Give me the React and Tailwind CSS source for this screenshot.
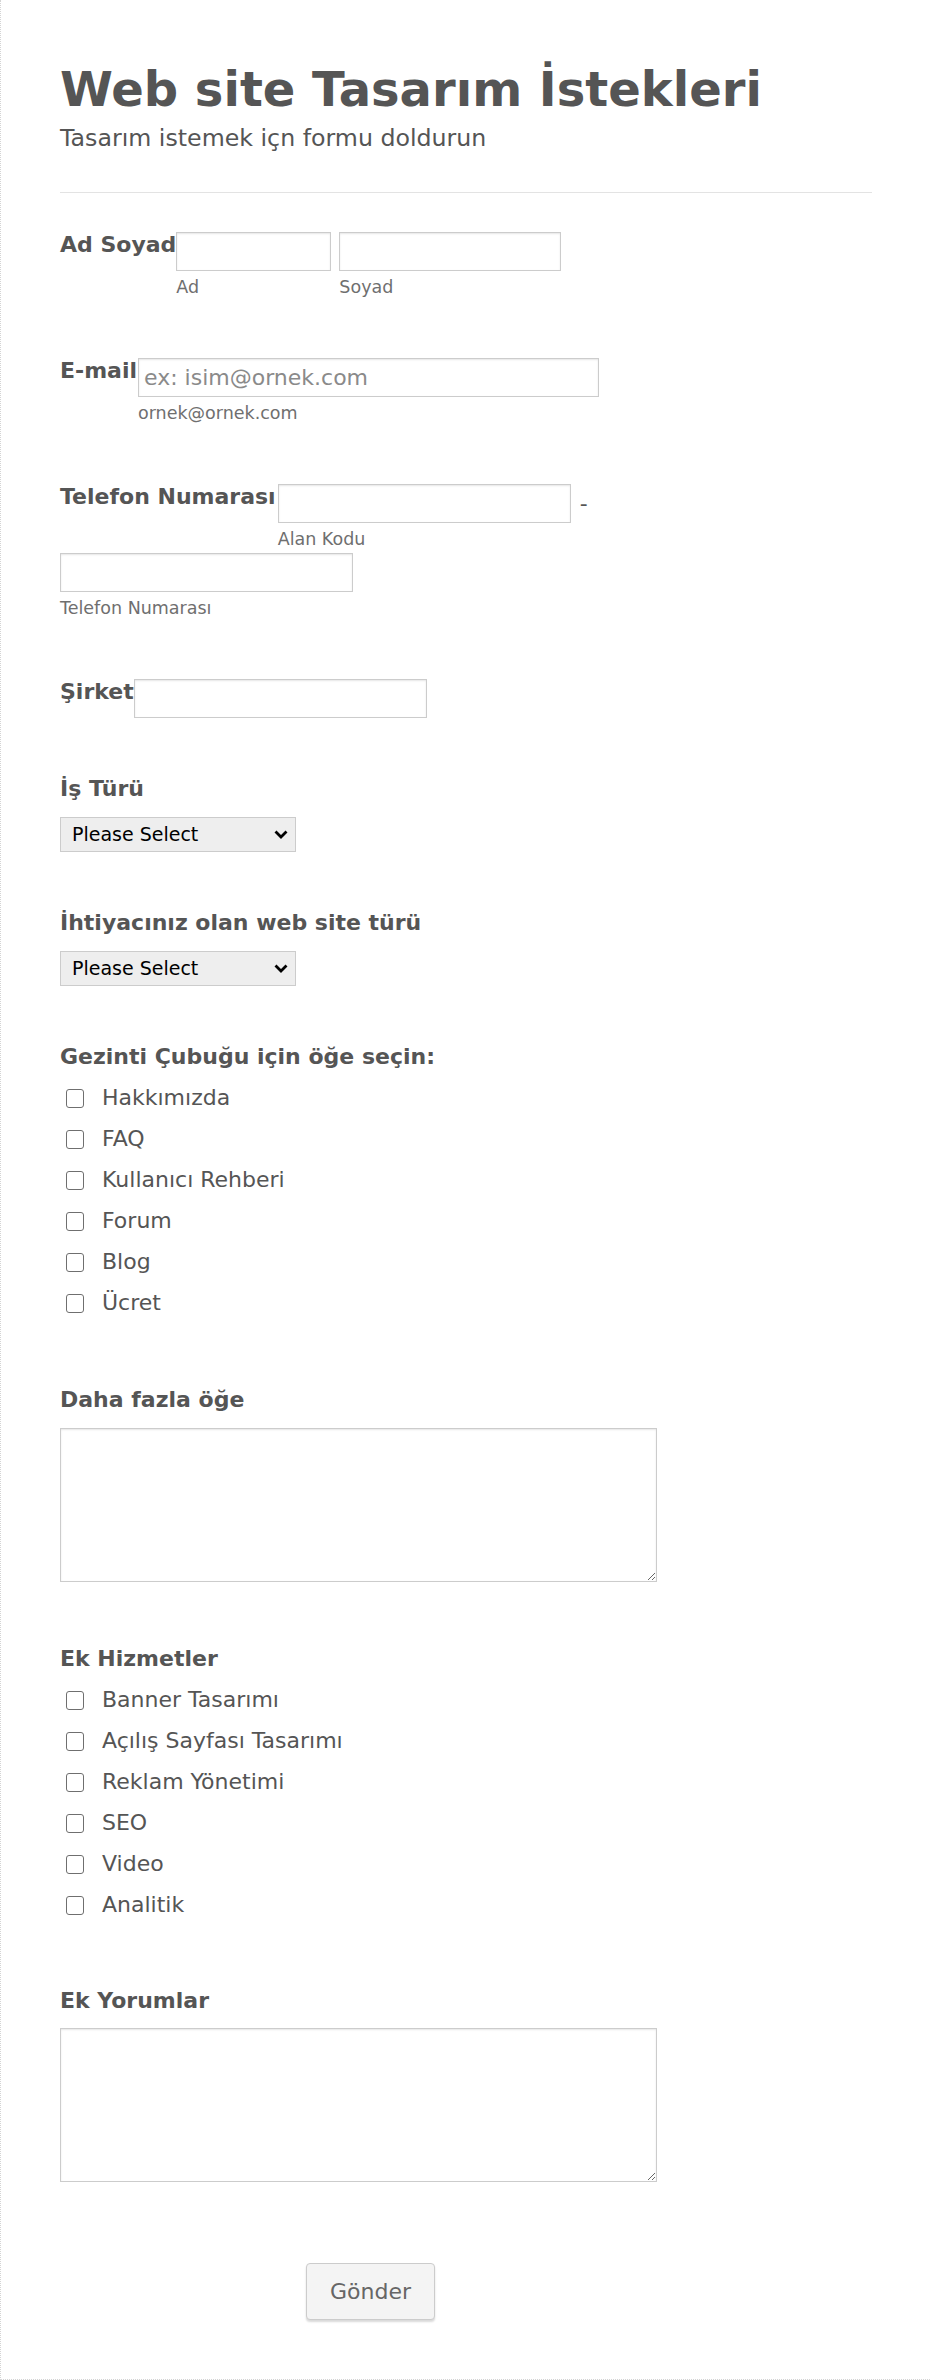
import React from 'react';

const inputCls =
  'block h-[39px] border border-[#cccccc] bg-white shadow-[inset_0_1px_2px_rgba(0,0,0,0.1)] px-[5px] text-[22px] text-[#555] placeholder:text-[#8a8a8a] outline-none';
const labelCls = 'text-[22px] leading-[26px] font-bold text-[#555] whitespace-nowrap';
const subCls = 'mt-[5px] text-[17.5px] leading-[22px] text-[#6f6f6f]';

function Field({ width, sub, placeholder }) {
  return (
    <div className="flex flex-col">
      <input type="text" placeholder={placeholder} className={`${inputCls} ${width}`} />
      {sub && <span className={subCls}>{sub}</span>}
    </div>
  );
}

function Select() {
  return (
    <div className="relative mt-[15px] w-[236px]">
      <select className="block w-[236px] h-[35px] appearance-none border border-[#cccccc] bg-[#eeeeee] pl-[11px] text-[19px] text-black outline-none">
        <option>Please Select</option>
      </select>
      {/* chevron */}
      <svg className="absolute right-[8px] top-[13px] pointer-events-none" width="14" height="9" viewBox="0 0 14 9">
        <polyline points="1.5,1.5 7,7 12.5,1.5" fill="none" stroke="#000" strokeWidth="2.8" />
      </svg>
    </div>
  );
}

function Checks({ items }) {
  return (
    <div className="mt-[15px] flex flex-col gap-[15px]">
      {items.map((item) => (
        <label key={item} className="flex items-center h-[26px]">
          <span className="ml-[6px] w-[18px] h-[19px] rounded-[3px] border-[1.5px] border-[#6f6f6f] bg-white" />
          <span className="ml-[18px] text-[22px] leading-[26px] text-[#555]">{item}</span>
        </label>
      ))}
    </div>
  );
}

function Area() {
  return (
    <textarea className="block mt-[15px] w-[597px] h-[154px] border border-[#cccccc] bg-white shadow-[inset_0_1px_2px_rgba(0,0,0,0.1)] outline-none" />
  );
}

export default function App() {
  return (
    <div className="h-[2380px] bg-white border-l border-b border-dotted border-[#d4d4d4] pl-[59px] pt-[61px] font-['DejaVu_Sans',sans-serif]">
      {/* Header */}
      <h1 className="text-[48px] leading-[56px] font-bold text-[#555]">Web site Tasarım İstekleri</h1>
      <p className="mt-[7px] text-[23.7px] leading-[28px] text-[#555]">Tasarım istemek içn formu doldurun</p>
      <div className="mt-[40px] w-[812px] border-t border-[#e3e3e3]" />

      {/* Ad Soyad */}
      <div className="mt-[39px] flex items-start">
        <span className={labelCls}>Ad Soyad</span>
        <div className="flex gap-[8px]">
          <Field width="w-[155px]" sub="Ad" />
          <Field width="w-[222px]" sub="Soyad" />
        </div>
      </div>

      {/* E-mail */}
      <div className="mt-[60px] flex items-start">
        <span className={`${labelCls} mr-[1px]`}>E-mail</span>
        <Field width="w-[461px]" sub="ornek@ornek.com" placeholder="ex: isim@ornek.com" />
      </div>

      {/* Telefon */}
      <div className="mt-[60px] flex items-start">
        <span className={`${labelCls} mr-[2px]`}>Telefon Numarası</span>
        <Field width="w-[293px]" sub="Alan Kodu" />
        <span className="ml-[9px] mt-[7px] text-[22px] leading-[26px] text-[#555]">-</span>
      </div>
      <div className="mt-[3px]">
        <Field width="w-[293px]" sub="Telefon Numarası" />
      </div>

      {/* Şirket */}
      <div className="mt-[60px] flex items-start">
        <span className={labelCls}>Şirket</span>
        <Field width="w-[293px]" />
      </div>

      {/* İş Türü */}
      <div className="mt-[58px]">
        <div className={labelCls}>İş Türü</div>
        <Select />
      </div>

      <div className="mt-[58px]">
        <div className={labelCls}>İhtiyacınız olan web site türü</div>
        <Select />
      </div>

      <div className="mt-[58px]">
        <div className={labelCls}>Gezinti Çubuğu için öğe seçin:</div>
        <Checks items={['Hakkımızda', 'FAQ', 'Kullanıcı Rehberi', 'Forum', 'Blog', 'Ücret']} />
      </div>

      <div className="mt-[71px]">
        <div className={labelCls}>Daha fazla öğe</div>
        <Area />
      </div>

      <div className="mt-[64px]">
        <div className={labelCls}>Ek Hizmetler</div>
        <Checks
          items={['Banner Tasarımı', 'Açılış Sayfası Tasarımı', 'Reklam Yönetimi', 'SEO', 'Video', 'Analitik']}
        />
      </div>

      <div className="mt-[70px]">
        <div className={labelCls}>Ek Yorumlar</div>
        <div className="-mt-[1px]">
          <Area />
        </div>
      </div>

      <div className="mt-[81px] ml-[246px]">
        <button className="w-[129px] h-[57px] rounded-[4px] border border-[#cccccc] bg-[#f4f4f4] shadow-[0_2px_2px_rgba(0,0,0,0.15)] text-[22px] text-[#666]">
          Gönder
        </button>
      </div>
    </div>
  );
}
